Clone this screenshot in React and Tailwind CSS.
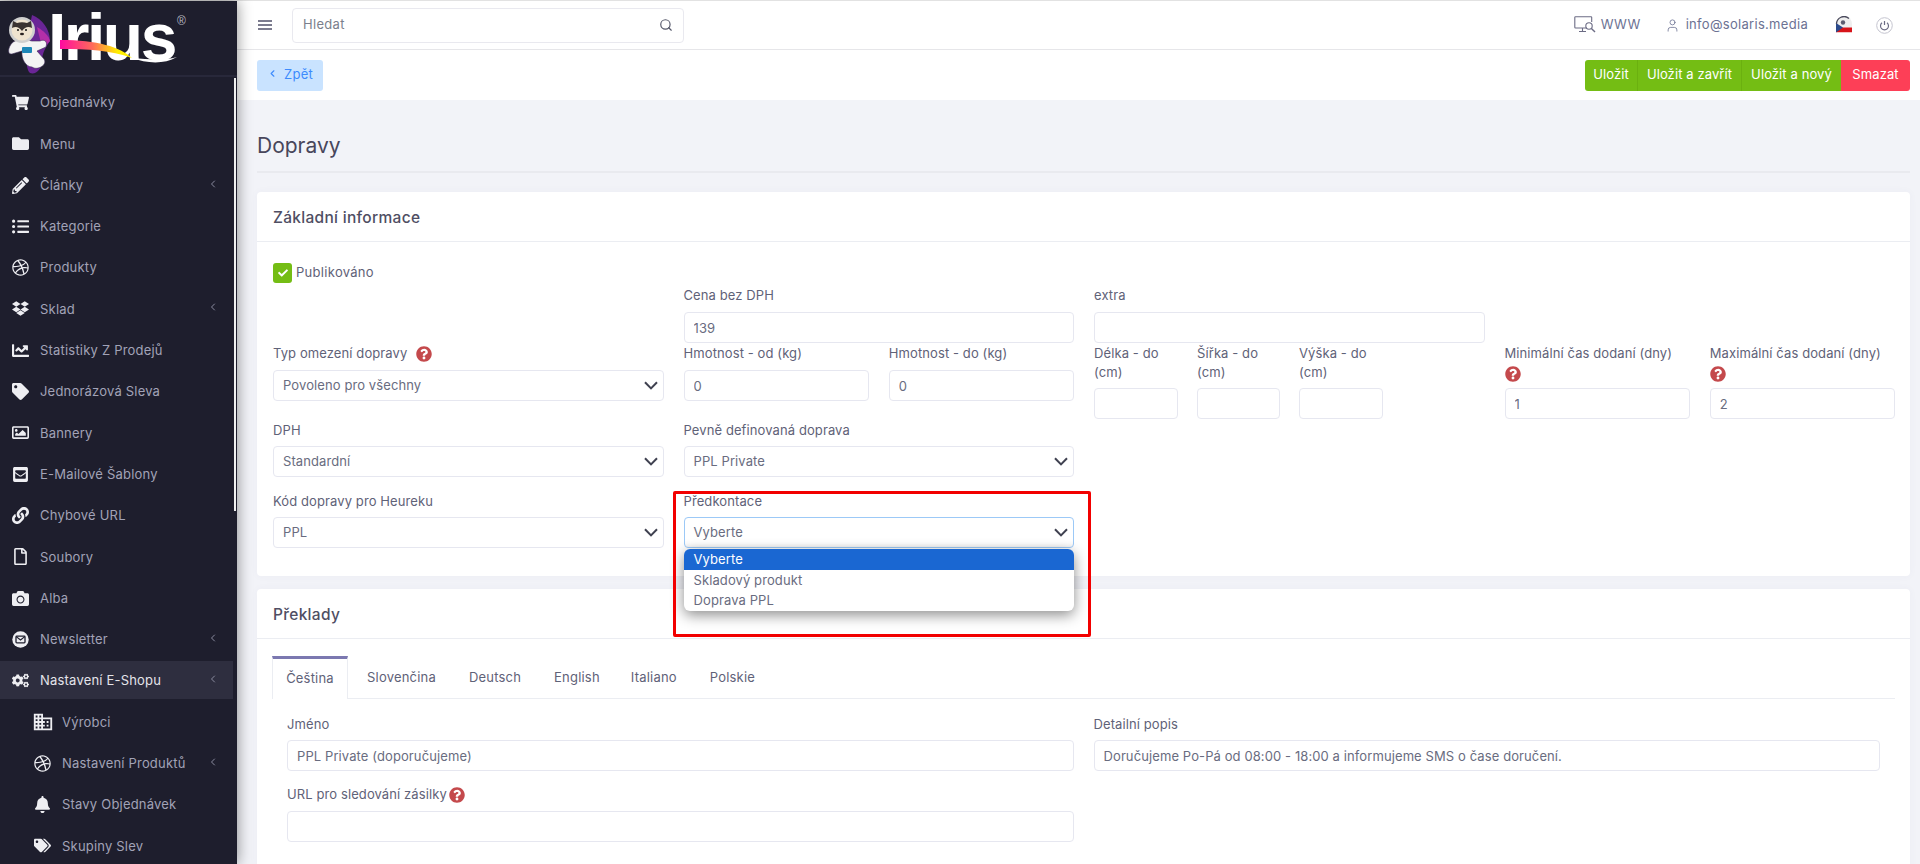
import React from "react";
import { ChevronLeft, Search, User } from "lucide-react";
import {
  FaShoppingCart, FaFolder, FaPencilAlt, FaListUl, FaDribbble, FaDropbox, FaChartLine, FaTag, FaRegImage,
  FaEnvelopeSquare, FaLink, FaRegFile, FaCamera, FaCogs, FaBell, FaTags, FaQuestionCircle, FaCheck,
} from "react-icons/fa";
import { MdDomain } from "react-icons/md";

const NewsIcon = ({ size = 17 }) => (
  <svg width={size} height={size} viewBox="0 0 17 17">
    <circle cx="8.5" cy="8.5" r="8.2" fill="currentColor" />
    <rect x="4" y="5.2" width="9" height="6.6" rx="0.8" fill="none" stroke="#1e1e2d" strokeWidth="1.3" />
    <path d="M4.2 5.6 8.5 9l4.3-3.4" fill="none" stroke="#1e1e2d" strokeWidth="1.2" />
  </svg>
);

const DomainIcon = () => <MdDomain size={22} className="shrink-0" />;

const items = [
  ["Objednávky", FaShoppingCart],
  ["Menu", FaFolder],
  ["Články", FaPencilAlt, true],
  ["Kategorie", FaListUl],
  ["Produkty", FaDribbble],
  ["Sklad", FaDropbox, true],
  ["Statistiky Z Prodejů", FaChartLine],
  ["Jednorázová Sleva", FaTag],
  ["Bannery", FaRegImage],
  ["E-Mailové Šablony", FaEnvelopeSquare],
  ["Chybové URL", FaLink],
  ["Soubory", FaRegFile],
  ["Alba", FaCamera],
  ["Newsletter", NewsIcon, true],
  ["Nastavení E-Shopu", FaCogs, true, "active"],
  ["Výrobci", DomainIcon, false, "sub"],
  ["Nastavení Produktů", FaDribbble, true, "sub"],
  ["Stavy Objednávek", FaBell, false, "sub"],
  ["Skupiny Slev", FaTags, false, "sub"],
];

const NavItem = ({ label, Icon, chevron, kind }) => (
  <div
    className={`flex items-center h-[38px] mb-[3.3px] w-[233px] shrink-0 text-[13px] tracking-[0.2px] ${
      kind === "active" ? "bg-[#2e2e3f] text-[#e4e4ea]" : "text-[#a2a3b7]"
    } ${kind === "sub" ? "pl-[34px]" : "pl-[12px]"}`}
  >
    <span className="w-[17px] h-[17px] mt-[1px] flex items-center justify-center text-[#eeeef2] shrink-0">
      <Icon size={17} />
    </span>
    <span className="ml-[11px] flex-1 whitespace-nowrap pt-[2px]">{label}</span>
    {chevron && <ChevronLeft size={12} strokeWidth={2} className="mr-[14px] text-[#8a8b9f] -mt-[2px]" />}
  </div>
);

const Logo = () => (
  <div className="relative h-[77px] flex items-center pl-[4px] border-b-2 border-[#28283a]">
    <svg width="48" height="72" viewBox="0 0 48 72" className="shrink-0 mt-[2px]">
      <path d="M28 12 C38 16 46 26 46 38 C42 44 38 50 38 58 C38 66 32 72 26 70 C20 64 22 40 28 12Z" fill="#6a2596" />
      <path d="M33 24 C40 28 45 33 46 38 C42 42 40 44 38 44Z" fill="#b42fa8" />
      <path d="M8 40 C3 46 4 52 8 51 L18 48 C17 56 22 64 28 64 C33 68 44 62 40 56 L33 48 L42 44 C44 38 40 36 36 38 L28 38 C20 36 12 36 8 40Z" fill="#f4f4f4" stroke="#3b2a55" strokeWidth="0.6" />
      <circle cx="18" cy="27" r="13" fill="#cfcfcf" />
      <circle cx="18" cy="27" r="10.5" fill="#efe3cf" />
      <path d="M8 25 L9 18 L13 20 C16 19 20 19 23 20 L27 18 L28 25 C24 23 21 24 18 28 C15 24 12 23 8 25Z" fill="#3a3230" />
      <circle cx="14" cy="27" r="1" fill="#111" />
      <circle cx="22" cy="27" r="1" fill="#111" />
      <ellipse cx="18" cy="31" rx="2" ry="1.3" fill="#2a2220" />
      <rect x="18" y="44" width="10" height="6" rx="1" fill="#1d87b8" />
    </svg>
    <span className="font-['Liberation_Sans',sans-serif] font-bold text-white text-[66px] leading-[72px] tracking-[-2.5px] -ml-[4px] -mt-[2px]">Irius</span>
    <span className="font-['Liberation_Sans',sans-serif] text-[#b9b9c2] text-[12px] -mt-[34px] ml-[2px]">®</span>
    <svg className="absolute left-[48px] top-[34px]" width="130" height="30" viewBox="0 0 130 30">
      <defs>
        <linearGradient id="sw" x1="0" x2="1" y1="0" y2="0">
          <stop offset="0" stopColor="#ff0aa0" />
          <stop offset="0.45" stopColor="#ff6a5a" />
          <stop offset="0.8" stopColor="#ffee00" />
        </linearGradient>
      </defs>
      <path d="M12 5 C50 5 72 12 84 23 C62 15 40 14 12 14Z" fill="url(#sw)" />
      <path d="M84 23 C98 28 115 30 129 22 C115 26 100 24 84 23Z" fill="#ffffff" />
    </svg>
  </div>
);

const Sidebar = () => (
  <aside className="relative z-10 w-[237px] shrink-0 bg-[#1e1e2d] flex flex-col overflow-hidden shadow-[0_0_14px_rgba(0,0,0,0.45)]">
    <Logo />
    <nav className="pt-[6px] flex flex-col">
      {items.map(([l, I, c, k]) => (
        <NavItem key={l} label={l} Icon={I} chevron={c} kind={k} />
      ))}
    </nav>
    <div className="absolute left-[234px] top-[77px] w-[2px] h-[433px] bg-[#f0f0f0]" />
  </aside>
);

const MonitorIcon = () => (
  <svg width="22" height="18" viewBox="0 0 22 18" fill="none" stroke="#6c6c85" strokeWidth="1.1">
    <path d="M13 12H1.5a.7.7 0 0 1-.7-.7V1.5a.7.7 0 0 1 .7-.7h15.5a.7.7 0 0 1 .7.7V6" />
    <path d="M5 15.5h7M8.5 12v3.5" />
    <circle cx="15" cy="10" r="3.2" />
    <path d="M17.4 12.4 21 16" strokeWidth="1.4" />
  </svg>
);

const FlagIcon = () => (
  <svg width="18" height="18" viewBox="0 0 18 18">
    <defs>
      <clipPath id="fc"><path d="M0 0h18v16.5H0z" /></clipPath>
    </defs>
    <g clipPath="url(#fc)">
      <path d="M1 8 A8 8 0 0 1 17 8 L17 12 L1 12Z" fill="#eeeeee" />
      <rect x="1" width="16" height="5" y="11.5" fill="#d7141a" />
      <path d="M1 7 L8 11.5 L1 16.5Z" fill="#2b4a8b" />
    </g>
    <path d="M1.5 8 A7.5 7.5 0 0 1 14 2.5" fill="none" stroke="#4a4a5c" strokeWidth="1.3" />
    <circle cx="8" cy="6.5" r="2.2" fill="#5c5c70" />
  </svg>
);

const PowerIcon = () => (
  <svg width="17" height="17" viewBox="0 0 17 17" fill="none" stroke="#6c6c85">
    <circle cx="8.5" cy="8.5" r="7.8" stroke="#c4c4cf" />
    <path d="M6 5.8a4 4 0 1 0 5 0" strokeWidth="1.2" />
    <path d="M8.5 4v4" strokeWidth="1.2" />
  </svg>
);

const Topbar = () => (
  <header className="h-[49px] shrink-0 bg-white border-b border-[#e6e6e9] flex items-center pl-[21px] pr-[27px] text-[13px] text-[#6c7293] tracking-[0.3px]">
    <div className="flex flex-col gap-[2.5px] w-[14px]">
      <span className="h-[1.5px] bg-[#7b7b8e]" />
      <span className="h-[1.5px] bg-[#7b7b8e]" />
      <span className="h-[1.5px] bg-[#7b7b8e]" />
    </div>
    <div className="ml-[20px] w-[392px] h-[35px] border border-[#e9e9ef] rounded-[4px] flex items-center px-[10px] justify-between">
      <span className="text-[#7b7f8c]">Hledat</span>
      <Search size={14} strokeWidth={2} className="text-[#55586a]" />
    </div>
    <div className="ml-auto flex items-center">
      <MonitorIcon />
      <span className="ml-[5px]">WWW</span>
      <User size={15} strokeWidth={1.3} className="ml-[24px] text-[#6c7293]" />
      <span className="ml-[6px]">info@solaris.media</span>
      <span className="ml-[27px] flex"><FlagIcon /></span>
      <span className="ml-[23px] flex"><PowerIcon /></span>
    </div>
  </header>
);

const Toolbar = () => (
  <div className="h-[50px] shrink-0 bg-white flex items-center justify-between pl-[20px] pr-[10px] text-[13px] tracking-[0.1px]">
    <button className="h-[31px] w-[66px] bg-[#c9e3ff] text-[#3d8bfd] rounded-[3px] flex items-center justify-center gap-[6px] tracking-[0.3px]">
      <ChevronLeft size={11} strokeWidth={2.5} className="-mt-1" />
      Zpět
    </button>
    <div className="flex h-[31px] text-white rounded-[3px] overflow-hidden">
      <span className="w-[53px] bg-[#74bd14] flex items-center justify-center border-r border-[#6bb010]">Uložit</span>
      <span className="w-[104px] bg-[#74bd14] flex items-center justify-center border-r border-[#6bb010]">Uložit a zavřít</span>
      <span className="w-[99px] bg-[#74bd14] flex items-center justify-center">Uložit a nový</span>
      <span className="w-[69px] bg-[#fd3f57] flex items-center justify-center">Smazat</span>
    </div>
  </div>
);

const Q = ({ className = "" }) => <FaQuestionCircle size={16} className={`text-[#c4494c] ${className}`} />;

const Label = ({ children, className = "" }) => (
  <div className={`text-[13px] leading-[19px] tracking-[0.1px] text-[#5f6278] ${className}`}>{children}</div>
);

const inputCls =
  "w-full h-[31px] bg-white border border-[#e6e7f0] rounded-[4px] px-[9px] text-[13px] tracking-[0.1px] text-[#696c80] outline-none block";

const Input = ({ value = "" }) => <input readOnly value={value} className={inputCls} />;

const Chevron = () => (
  <svg width="14" height="9" viewBox="0 0 14 9" fill="none" stroke="#3f4150" strokeWidth="2">
    <path d="M1 1.2 7 7.4 13 1.2" />
  </svg>
);

const Select = ({ value, focus }) => (
  <div
    className={`relative h-[31px] bg-white border rounded-[4px] pl-[9px] pr-[5px] flex items-center justify-between text-[13px] tracking-[0.1px] text-[#696c80] ${
      focus ? "border-[#9cc9f7] shadow-[inset_0_-6px_6px_-6px_rgba(0,0,0,0.08)]" : "border-[#e6e7f0]"
    }`}
  >
    <span>{value}</span>
    <Chevron />
  </div>
);

const Card = ({ title, children }) => (
  <section className="bg-white rounded-[4px] shadow-[0_0_8px_rgba(80,80,120,0.04)]">
    <div className="h-[50px] border-b border-[#ebedf2] px-[16px] pt-[3px] flex items-center text-[15.5px] font-medium tracking-[0.3px] text-[#4f4e63]">
      {title}
    </div>
    {children}
  </section>
);

const Basic = () => (
  <Card title="Základní informace">
    <div className="grid grid-cols-4 gap-x-[20px] pl-[16px] pr-[15px] pt-[21px] pb-[28px]">
      <div>
        <div className="flex items-center h-[20px]">
          <span className="w-[19px] h-[20px] rounded-[3px] bg-[#74bd14] flex items-center justify-center">
            <FaCheck size={10} className="text-white" />
          </span>
          <span className="ml-[4px] text-[13px] tracking-[0.3px] text-[#5f6278]">Publikováno</span>
        </div>
        <Label className="mt-[61px] mb-[7px] flex items-center gap-[9px]">Typ omezení dopravy <Q /></Label>
        <Select value="Povoleno pro všechny" />
        <Label className="mt-[20px] mb-[6px]">DPH</Label>
        <Select value="Standardní" />
        <Label className="mt-[15px] mb-[6px]">Kód dopravy pro Heureku</Label>
        <Select value="PPL" />
      </div>

      <div className="pt-[23px]">
        <Label className="mb-[7px]">Cena bez DPH</Label>
        <Input value="139" />
        <div className="grid grid-cols-2 gap-x-[20px] mt-px">
          <div>
            <Label className="mb-[7px]">Hmotnost - od (kg)</Label>
            <Input value="0" />
          </div>
          <div>
            <Label className="mb-[7px]">Hmotnost - do (kg)</Label>
            <Input value="0" />
          </div>
        </div>
        <Label className="mt-[20px] mb-[6px]">Pevně definovaná doprava</Label>
        <Select value="PPL Private" />
        <div className="relative mt-[15px]">
          <Label className="mb-[6px]">Předkontace</Label>
          <Select value="Vyberte" focus />
          <div className="absolute z-20 left-0 right-0 top-[57px] bg-white rounded-[6px] overflow-hidden shadow-[0_4px_14px_rgba(0,0,0,0.45)] text-[13px] leading-[20.5px] text-[#696c80] tracking-[0.1px]">
            <div className="bg-[#1a67d2] text-white px-[10px]">Vyberte</div>
            <div className="px-[10px]">Skladový produkt</div>
            <div className="px-[10px]">Doprava PPL</div>
          </div>
          <div className="absolute z-30 -left-[11px] -top-[1px] w-[418px] h-[146px] border-[3px] border-[#f20000] rounded-[2px]" />
        </div>
      </div>

      <div className="pt-[23px]">
        <Label className="mb-[7px]">extra</Label>
        <Input />
        <div className="grid grid-cols-[84px_83px_84px] gap-x-[19px] mt-px">
          {["Délka - do (cm)", "Šířka - do (cm)", "Výška - do (cm)"].map((l) => (
            <div key={l}>
              <Label className="mb-[6px]">{l}</Label>
              <Input />
            </div>
          ))}
        </div>
      </div>

      <div className="pt-[81px] grid grid-cols-2 gap-x-[20px] content-start">
        {[["Minimální čas dodaní (dny)", "1"], ["Maximální čas dodaní (dny)", "2"]].map(([l, v]) => (
          <div key={l}>
            <Label className="mb-[6px] whitespace-nowrap">{l}<Q className="block mt-[3px]" /></Label>
            <Input value={v} />
          </div>
        ))}
      </div>
    </div>
  </Card>
);

const Translations = () => (
  <Card title="Překlady">
    <div className="px-[15px] pt-[17px] pb-[40px]">
      <div className="flex h-[43px] border-b border-[#ebedf2] text-[13px] tracking-[0.2px] text-[#5f6278]">
        <div className="w-[76px] border-t-[3px] border-x border-x-[#ebedf2] border-t-[#7b78b0] -mb-px bg-white flex items-center justify-center pb-[1px]">Čeština</div>
        <div className="ml-[19px] pt-[12px]">Slovenčina</div>
        <div className="ml-[33px] pt-[12px]">Deutsch</div>
        <div className="ml-[33px] pt-[12px]">English</div>
        <div className="ml-[31px] pt-[12px]">Italiano</div>
        <div className="ml-[33px] pt-[12px]">Polskie</div>
      </div>
      <div className="grid grid-cols-2 gap-x-[20px] pl-[15px] pr-[15px] pt-[16px]">
        <div>
          <Label className="mb-[6px]">Jméno</Label>
          <Input value="PPL Private (doporučujeme)" />
          <Label className="mt-[14px] mb-[7px] flex items-center gap-[2px]">URL pro sledování zásilky <Q /></Label>
          <Input />
        </div>
        <div>
          <Label className="mb-[6px]">Detailní popis</Label>
          <Input value="Doručujeme Po-Pá od 08:00 - 18:00 a informujeme SMS o čase doručení." />
        </div>
      </div>
    </div>
  </Card>
);

export default function App() {
  return (
    <div className="w-[1920px] h-[864px] overflow-hidden flex flex-col bg-[#f2f3f8] font-['Inter','Open_Sans',sans-serif]">
      <div className="h-px shrink-0 bg-[#e2e2e2]" />
      <div className="flex flex-1 min-h-0">
        <Sidebar />
        <main className="flex-1 min-w-0 flex flex-col">
          <Topbar />
          <Toolbar />
          <div className="flex-1 min-h-0 px-[20px] pr-[10px] overflow-hidden">
            <div className="h-[73px] border-b-2 border-[#e9eaef] flex items-end pb-[10px] text-[21px] text-[#48465b]">Dopravy</div>
            <div className="mt-[19px] flex flex-col gap-[13px]">
              <Basic />
              <Translations />
            </div>
          </div>
        </main>
      </div>
    </div>
  );
}
